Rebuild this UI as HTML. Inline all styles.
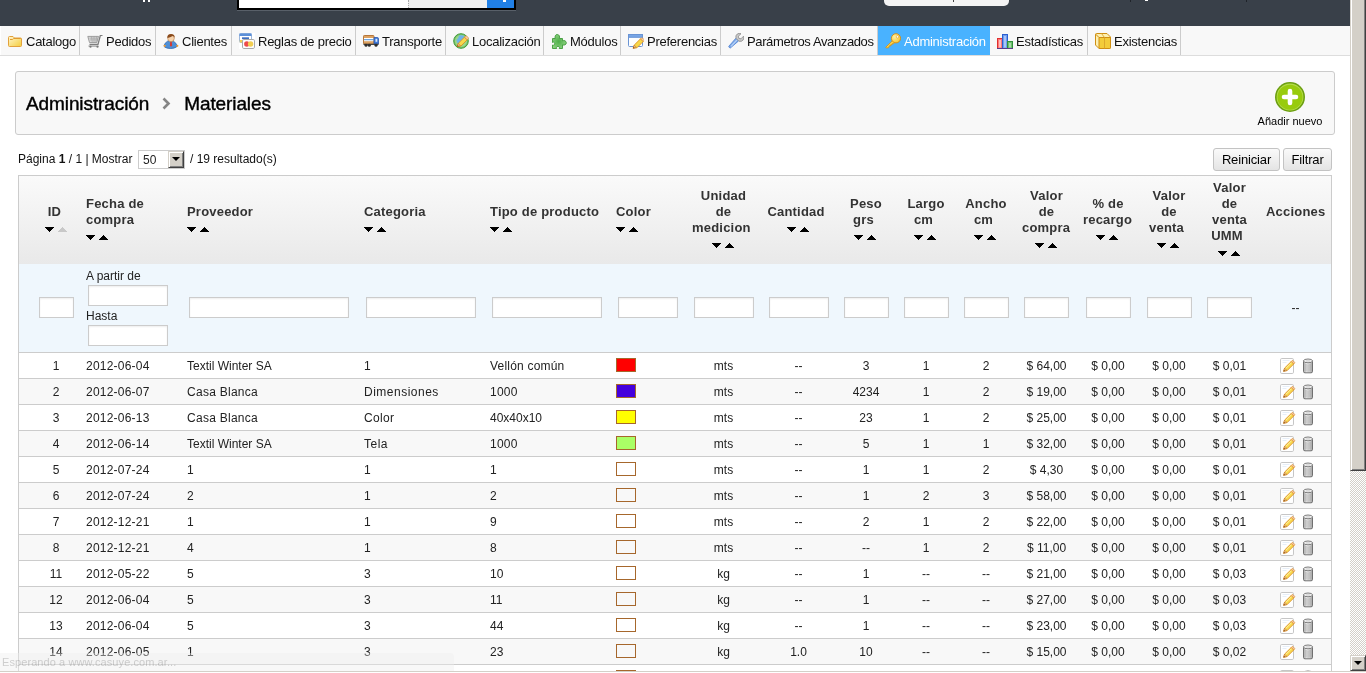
<!DOCTYPE html>
<html lang="es"><head><meta charset="utf-8"><title>Materiales</title>
<style>
*{box-sizing:border-box}
html,body{margin:0;padding:0}
body{width:1366px;height:673px;overflow:hidden;position:relative;background:#fff;font-family:"Liberation Sans",Arial,sans-serif;font-size:12px;color:#222}
#page{will-change:transform;position:absolute;left:0;top:0;width:1350px;height:671px;overflow:hidden;background:#fff}
#hdr{position:absolute;left:0;top:0;width:1350px;height:26px;background:#394049}
#hdr i{position:absolute;display:block}
#menu{position:absolute;left:0;top:26px;width:1350px;height:30px;background:#f8f8f8;box-shadow:inset 1px 0 0 #fff;border-bottom:1px solid #ddd;margin:0;padding:0;list-style:none}
#menu li{position:relative;float:left;height:29px;border-right:1px solid #ccc;padding:0 0 0 26px;font-size:13px;line-height:32px;white-space:nowrap;color:#111;letter-spacing:-.25px;overflow:hidden}
#menu li.act{background:#49b2ff;color:#fff;border-right-color:#49b2ff}
#menu li .ic{position:absolute;left:7px;top:7px}
#tb{position:absolute;left:15px;top:71px;width:1320px;height:64px;background:#f8f8f8;border:1px solid #ccc;border-radius:3px}
#tb h3{position:absolute;left:10px;top:20px;margin:0;font-weight:normal;-webkit-text-stroke:.4px #000;font-size:19px;line-height:24px;color:#000;white-space:nowrap;letter-spacing:-.1px}
#tb h3 .sep{display:inline-block;width:35px;text-align:center;color:#777;font-size:15px;vertical-align:0}
#add{position:absolute;left:1241px;top:9px;width:66px;text-align:center;font-size:11px;color:#000}
#pag{position:absolute;left:18px;top:151px;height:17px;line-height:17px;font-size:12px;white-space:nowrap;color:#111}
.sel{position:absolute;left:138px;top:150px;width:47px;height:19px;border:1px solid #ccc;background:#fff}
#pag2{position:absolute;left:190px;top:151px;height:17px;line-height:17px;font-size:12px;white-space:nowrap;color:#111}
.btn{position:absolute;top:148px;height:23px;border:1px solid #c3c3c3;border-radius:3px;background:linear-gradient(#fafafa,#e4e4e4);font-size:13px;line-height:21px;text-align:center;color:#000;letter-spacing:-.15px}
table{position:absolute;left:18px;top:175px;width:1314px;border-collapse:separate;border-spacing:0;border:1px solid #ccc;table-layout:fixed;font-size:12px}
th{font-size:13px;font-weight:bold;color:#333;text-align:left;padding:0 6px;vertical-align:middle;line-height:16px;letter-spacing:.2px}
th.c,td.c{text-align:center}
tr.h{height:88px;background:linear-gradient(#fafafa,#e9e9e9)}
tr.f{height:89px;background:#eff7fd}
tr.f td{border-bottom:1px solid #ccc;padding:0 6px 2px;vertical-align:middle}
tr.r td{height:26px;border-bottom:1px solid #ccc;padding:0 6px;white-space:nowrap;color:#222}
tr.alt{background:#f8f8f8}
.dn,.up{display:inline-block;width:9px;height:5px;vertical-align:0}
.dn{margin-right:4px}
th.c .up{margin-right:2px}
.ls{margin-right:5px}
.in{display:inline-block;height:21px;border:1px solid #ccc;background:#fff;box-shadow:inset 0 1px 2px #eee;margin:0 2px;vertical-align:middle}
.dt{position:relative;height:88px}.dt span{position:absolute;left:6px;line-height:16px;white-space:nowrap}.dt span.in{left:8px;width:80px;margin:0}
.sw{display:inline-block;width:20px;height:14px;border:1px solid #a6672c;vertical-align:middle;margin-top:-2px}
.pe{vertical-align:middle;margin-right:4px}.tr{vertical-align:middle}
td.ac{text-align:left;padding-left:20px!important}
#sb{position:absolute;left:1350px;top:0;width:16px;height:671px;background-color:#fff;background-image:conic-gradient(#d4d0c8 25%,#fff 0 50%,#d4d0c8 0 75%,#fff 0);background-size:2px 2px}
.w3d{position:absolute;left:0;width:16px;background:#d4d0c8;border:1px solid;border-color:#d4d0c8 #404040 #404040 #d4d0c8;box-shadow:inset 1px 1px 0 #fff,inset -1px -1px 0 #808080}
#status{position:absolute;left:0;top:653px;width:454px;height:18px;background:rgba(238,238,238,.4);border-top-right-radius:4px;color:rgba(110,110,110,.3);font-size:11px;line-height:18px;padding-left:2px;letter-spacing:.08px}
</style></head><body>
<svg width="0" height="0" style="position:absolute"><defs>
<linearGradient id="gF" x1="0" y1="0" x2="1" y2="1"><stop offset="0" stop-color="#fff7cf"/><stop offset="1" stop-color="#f4cd3c"/></linearGradient>
<radialGradient id="gP" cx=".45" cy=".5" r=".6"><stop offset="0" stop-color="#4fae4a"/><stop offset="1" stop-color="#8fd482"/></radialGradient>
<radialGradient id="gK" cx=".35" cy=".35" r=".8"><stop offset="0" stop-color="#fff0a0"/><stop offset="1" stop-color="#f6bf20"/></radialGradient>
<linearGradient id="gT" x1="0" x2="1" y1="0" y2="0"><stop offset="0" stop-color="#a2a2a2"/><stop offset=".35" stop-color="#efefef"/><stop offset=".7" stop-color="#d6d6d6"/><stop offset="1" stop-color="#9a9a9a"/></linearGradient>
</defs></svg>
<div id="page">
<div id="hdr">
 <i style="left:143px;top:0;width:2px;height:2px;background:#fff"></i><i style="left:148px;top:0;width:2px;height:2px;background:#fff"></i>
 <i style="left:237px;top:0;width:279px;height:10px;background:#000"></i>
 <i style="left:237px;top:10px;width:279px;height:1px;background:#596069"></i>
 <i style="left:239px;top:0;width:169px;height:8px;background:#fff"></i>
 <i style="left:408px;top:0;width:79px;height:8px;background:#efefef;border-left:1px dotted #aaa"></i>
 <i style="left:487px;top:0;width:27px;height:8px;background:#2180e6"></i>
 <i style="left:503px;top:0;width:3px;height:2px;background:#fff"></i>
 <i style="left:884px;top:0;width:125px;height:6px;background:#f4f4f4;border-radius:0 0 5px 5px"></i>
 <i style="left:953px;top:0;width:1px;height:2px;background:#444"></i>
 <i style="left:1130px;top:0;width:1px;height:2px;background:#1f2329"></i>
 <i style="left:1145px;top:0;width:3px;height:1px;background:#fff"></i>
 <i style="left:1246px;top:0;width:1px;height:2px;background:#1f2329"></i>
</div>
<ul id="menu">
<li style="width:80px"><svg class="ic" width="16" height="16" viewBox="0 0 16 16"><path d="M1.500 4.500q0-1 1-1h3.500l1.500 1.500h6q1 0 1 1v6.500q0 1-1 1h-11q-1 0-1-1z" fill="url(#gF)" stroke="#e2a13c"/><path d="M3 6.500h2.500l1.200-1h7" fill="none" stroke="#e09a30"/></svg>Catalogo</li>
<li style="width:76px"><svg class="ic" width="16" height="16" viewBox="0 0 16 16"><g transform="translate(0,1.200) scale(1,.880)"><path d="M.800 2.500h10.700l-1.700 7h-7.300z" fill="#d9d9d9" stroke="#8f8f8f" stroke-width=".9"/><path d="M2.500 4.500h8.200M3 6.500h7.300M4.500 2.500l.800 7M7 2.500v7M9.500 2.500l-.700 7" stroke="#9a9a9a" stroke-width=".6" fill="none"/><path d="M15.500 1.500h-2.200l-2.300 10h-8.500" fill="none" stroke="#7d7d7d" stroke-width="1.300"/><path d="M1.500 13.500h10" stroke="#a5a5a5" stroke-width="1.600"/><circle cx="3.500" cy="14.300" r="1.100" fill="#777"/><circle cx="10.500" cy="14.300" r="1.100" fill="#777"/></g></svg>Pedidos</li>
<li style="width:76px"><svg class="ic" width="16" height="16" viewBox="0 0 16 16"><path d="M1.500 14q-.800-1.500.500-3.500l2.500-2.300h6l2.500 2.300q1.300 2 .500 3.500-2.500 1.500-6 1.500t-6-1.500z" fill="#4e8fd6" stroke="#2c66b0" stroke-width=".8"/><circle cx="1.700" cy="12.800" r="1.100" fill="#f29a2e"/><circle cx="14.300" cy="12.800" r="1.100" fill="#f29a2e"/><path d="M7.300 8.500h1.400l.500 4-1.200 1.200-1.200-1.200z" fill="#d83a2e"/><ellipse cx="8" cy="5.300" rx="3.300" ry="3.400" fill="#f6d3ad" stroke="#b77a45" stroke-width=".6"/><path d="M4.300 5q-.300-4 3.700-4t3.700 4q-.700-1.800-2-2-2.500 1.500-5.400 2z" fill="#8a4b1c"/></svg>Clientes</li>
<li style="width:124px"><svg class="ic" width="16" height="16" viewBox="0 0 16 16"><rect width="16" height="16" fill="#fff"/><rect x=".500" y=".500" width="12" height="9" rx="1" fill="#fff" stroke="#9db7dc"/><rect x=".500" y=".500" width="12" height="2.500" fill="#5b8fd8"/><path d="M3 5.200h7" stroke="#3f6fc0" stroke-width="1.800"/><rect x=".800" y="7" width="3" height="2.500" fill="#f5cf4d"/><rect x="3.500" y="6.500" width="12" height="9" rx="1.300" fill="#fdfdfd" stroke="#a9a9a9"/><circle cx="7.800" cy="11" r="2.700" fill="#ee4a4a"/><circle cx="11.600" cy="11" r="2.700" fill="#f3cf52"/></svg>Reglas de precio</li>
<li style="width:90px"><svg class="ic" width="16" height="16" viewBox="0 0 16 16"><rect x=".500" y="2.500" width="10.500" height="8.500" rx=".800" fill="#dca262" stroke="#b5763a"/><rect x="1" y="5" width="9.500" height="3.200" fill="#fff"/><rect x="1" y="6.200" width="9.500" height="1" fill="#4d8fd8"/><path d="M11 4.500h3.200q1.300 0 1.300 1.300v5.200h-4.500z" fill="#3c78d8" stroke="#2a57ae" stroke-width=".8"/><rect x="12.500" y="5.800" width="1.800" height="3" fill="#dbe8fa"/><rect x=".500" y="10.800" width="15" height="1.200" fill="#444"/><circle cx="3" cy="12.300" r="1.500" fill="#2e2e2e"/><circle cx="6.300" cy="12.300" r="1.500" fill="#2e2e2e"/><circle cx="13" cy="12.300" r="1.500" fill="#2e2e2e"/></svg>Transporte</li>
<li style="width:98px"><svg class="ic" width="16" height="16" viewBox="0 0 16 16"><circle cx="8" cy="8" r="7.300" fill="#7cc36a" stroke="#3f9a3a" stroke-width="1"/><circle cx="8" cy="8" r="6" fill="#9ad88a"/><path d="M6 2.500q5-1.500 7 3l-6 6q-3.500-1-3.500-4.500 2-1 2.500-4.500z" fill="#6eb4e8"/><path d="M4.200 13.600l1-3.200 6.300-6.300 2.700 2.700-6.300 6.300z" fill="#f7d84a" stroke="#d98a1e" stroke-width=".8" stroke-linejoin="round"/><path d="M11.500 4.100l2.700 2.700 1-1q.500-.600 0-1.200l-1.500-1.500q-.600-.500-1.200 0z" fill="#f8c9a8" stroke="#d98a1e" stroke-width=".6"/><path d="M4.200 13.600l1-3.200 2.200 2.200z" fill="#f0c28a" stroke="#b86a1a" stroke-width=".5"/><path d="M4.200 13.600l.400-1.400 1 1z" fill="#6b3a10"/></svg>Localización</li>
<li style="width:77px"><svg class="ic" width="16" height="16" viewBox="0 0 16 16"><path d="M1.500 5.500h2.800q-.600-1.300 0-2.700t2-1.300 2 1.300 0 2.700h3.200v2.300q1.300-.600 2.500 0t1.300 2-1.300 2-2.500 0v3.700h-3.300q.600-1.300-.300-1.900t-1.900 0-.300 1.900h-4.200v-3.500q1.200.600 1.900-.300t0-2-1.900-.200z" fill="url(#gP)" stroke="#3f9a3a" stroke-width=".9" stroke-linejoin="round"/></svg>Módulos</li>
<li style="width:100px"><svg class="ic" width="16" height="16" viewBox="0 0 16 16"><rect x=".500" y="1.500" width="14" height="12" rx="1" fill="#fdfeff" stroke="#6a94d4"/><rect x=".500" y="1.500" width="14" height="2.800" fill="#78a6e6" stroke="#6a94d4"/><path d="M5.200 15.300l1-3.200 6.300-6.300 2.700 2.700-6.300 6.300z" fill="#f7d84a" stroke="#d98a1e" stroke-width=".8" stroke-linejoin="round"/><path d="M12.500 5.800l2.700 2.700 .800-.800q.500-.600 0-1.200l-1.500-1.500q-.600-.500-1.200 0z" fill="#f8c9a8" stroke="#d98a1e" stroke-width=".6"/><path d="M5.200 15.300l1-3.200 2.200 2.200z" fill="#f0c28a" stroke="#b86a1a" stroke-width=".5"/><path d="M5.200 15.300l.400-1.400 1 1z" fill="#6b3a10"/></svg>Preferencias</li>
<li style="width:157px;letter-spacing:-.38px"><svg class="ic" width="16" height="16" viewBox="0 0 16 16"><path d="M2.300 15q-1.300-.300-1.600-1.600l7.200-8.200 2.700 2.700z" fill="#7aa7e8" stroke="#4d7fd0" stroke-width=".8" stroke-linejoin="round"/><path d="M3 13.300l6-6.500" stroke="#b8d2f6" stroke-width="1.200"/><path d="M8 5.300q-.800-2.800 1.300-4.300 1.800-1.200 3.700-.300l-2.600 2.500.400 2.200 2.200.400 2.500-2.600q.900 1.900-.300 3.700-1.500 2.100-4.300 1.300z" fill="#c9c9c9" stroke="#8a8a8a" stroke-width=".8" stroke-linejoin="round"/></svg>Parámetros Avanzados</li>
<li class="act" style="width:112px"><svg class="ic" width="16" height="16" viewBox="0 0 16 16"><path d="M.800 14.200l7.700-7.500 2 2-2.200 2.200-1-.300-.300 1.300-1.200-.200-.200 1.300-1.300-.200-.700 1.900-2.300.300z" fill="#fbd648" stroke="#d48a12" stroke-width=".8" stroke-linejoin="round"/><circle cx="11" cy="5.300" r="4.600" fill="url(#gK)" stroke="#d48a12" stroke-width=".9"/><circle cx="12.500" cy="3.800" r="1.200" fill="#fff" stroke="#d48a12" stroke-width=".5"/></svg>Administración</li>
<li style="width:98px"><svg class="ic" width="16" height="16" viewBox="0 0 16 16"><rect x=".500" y="5.500" width="5" height="10" fill="#f77" stroke="#e03030"/><rect x="2" y="7" width="2" height="7.500" fill="#fbb"/><rect x="5.500" y="1.500" width="5" height="14" fill="#6f9df0" stroke="#2c5fd0"/><rect x="7" y="3" width="2" height="11.500" fill="#a9c4f7"/><rect x="10.500" y="8.500" width="5" height="7" fill="#6cbf6c" stroke="#2f8f3a"/><rect x="12" y="10" width="2" height="4.500" fill="#a8dba8"/><path d="M0 15.500h16" stroke="#5a3a8a" stroke-width="1"/></svg>Estadísticas</li>
<li style="width:93px"><svg class="ic" width="16" height="16" viewBox="0 0 16 16"><path d="M.500 1.500q0-1 1-1h10.500l3.500 3.500v10.500q0 1-1 1h-10.500l-3.500-3.500z" fill="#fdf0b0" stroke="#cf8f14" stroke-linejoin="round"/><path d="M4 4.500h11.500v10q0 1-1 1h-10.500z" fill="#f3cc3a" stroke="#cf8f14" stroke-linejoin="round"/><path d="M.500 1l3.500 3.500" stroke="#cf8f14"/><path d="M6.500 .500l3 4v11" fill="none" stroke="#d9a42a" stroke-width=".9"/></svg>Existencias</li>
</ul>
<div id="tb"><h3>Administración<span class="sep"><svg width="9" height="13" viewBox="0 0 9 13"><path d="M1.500 1.500l5 5-5 5" fill="none" stroke="#858585" stroke-width="2.600"/></svg></span>Materiales</h3>
<div id="add"><svg width="32" height="32" viewBox="0 0 32 32" style="display:block;margin:0 auto 2px"><circle cx="16" cy="16" r="15" fill="#6c9f10"/><circle cx="16" cy="16" r="13.400" fill="#b4db4a"/><circle cx="16" cy="16.200" r="12.500" fill="#98cb0d"/><path d="M10 16h12M16 10v12" stroke="#fff" stroke-width="4.600" stroke-linecap="round"/></svg>Añadir nuevo</div>
</div>
<div id="pag">Página <b>1</b> / 1 | Mostrar</div>
<div class="sel"><span style="position:absolute;left:4px;top:1px;line-height:17px;font-size:12px">50</span><span class="w3d" style="left:29px;top:0;width:16px;height:17px"><i style="position:absolute;left:3px;top:5px;border-left:4px solid transparent;border-right:4px solid transparent;border-top:4px solid #000"></i></span></div>
<div id="pag2">/ 19 resultado(s)</div>
<div class="btn" style="left:1213px;width:67px">Reiniciar</div>
<div class="btn" style="left:1283px;width:49px">Filtrar</div>
<table>
<colgroup><col style="width:13px"><col style="width:48px"><col style="width:101px"><col style="width:177px"><col style="width:126px"><col style="width:126px"><col style="width:76px"><col style="width:75px"><col style="width:75px"><col style="width:60px"><col style="width:60px"><col style="width:60px"><col style="width:61px"><col style="width:62px"><col style="width:60px"><col style="width:61px"><col style="width:71px"></colgroup>
<tr class="h"><th></th>
<th class="c" style="padding-left:8px"><span class="tl"><span class="ls">ID</span></span><br><svg class="dn" viewBox="0 0 9 5" shape-rendering="crispEdges"><path d="M0 0h9v1h-1v1h-1v1h-1v1h-1v1h-1v-1h-1v-1h-1v-1h-1v-1h-1z" fill="#000"/></svg><svg class="up" viewBox="0 0 9 5" shape-rendering="crispEdges"><path d="M0 5h9v-1h-1v-1h-1v-1h-1v-1h-1v-1h-1v1h-1v1h-1v1h-1v1h-1z" fill="#c8c8c8"/></svg></th>
<th class=""><span class="tl">Fecha de<br>compra</span><br><svg class="dn" viewBox="0 0 9 5" shape-rendering="crispEdges"><path d="M0 0h9v1h-1v1h-1v1h-1v1h-1v1h-1v-1h-1v-1h-1v-1h-1v-1h-1z" fill="#000"/></svg><svg class="up" viewBox="0 0 9 5" shape-rendering="crispEdges"><path d="M0 5h9v-1h-1v-1h-1v-1h-1v-1h-1v-1h-1v1h-1v1h-1v1h-1v1h-1z" fill="#000"/></svg></th>
<th class=""><span class="tl">Proveedor</span><br><svg class="dn" viewBox="0 0 9 5" shape-rendering="crispEdges"><path d="M0 0h9v1h-1v1h-1v1h-1v1h-1v1h-1v-1h-1v-1h-1v-1h-1v-1h-1z" fill="#000"/></svg><svg class="up" viewBox="0 0 9 5" shape-rendering="crispEdges"><path d="M0 5h9v-1h-1v-1h-1v-1h-1v-1h-1v-1h-1v1h-1v1h-1v1h-1v1h-1z" fill="#000"/></svg></th>
<th class=""><span class="tl">Categoria</span><br><svg class="dn" viewBox="0 0 9 5" shape-rendering="crispEdges"><path d="M0 0h9v1h-1v1h-1v1h-1v1h-1v1h-1v-1h-1v-1h-1v-1h-1v-1h-1z" fill="#000"/></svg><svg class="up" viewBox="0 0 9 5" shape-rendering="crispEdges"><path d="M0 5h9v-1h-1v-1h-1v-1h-1v-1h-1v-1h-1v1h-1v1h-1v1h-1v1h-1z" fill="#000"/></svg></th>
<th class=""><span class="tl">Tipo de producto</span><br><svg class="dn" viewBox="0 0 9 5" shape-rendering="crispEdges"><path d="M0 0h9v1h-1v1h-1v1h-1v1h-1v1h-1v-1h-1v-1h-1v-1h-1v-1h-1z" fill="#000"/></svg><svg class="up" viewBox="0 0 9 5" shape-rendering="crispEdges"><path d="M0 5h9v-1h-1v-1h-1v-1h-1v-1h-1v-1h-1v1h-1v1h-1v1h-1v1h-1z" fill="#000"/></svg></th>
<th class=""><span class="tl">Color</span><br><svg class="dn" viewBox="0 0 9 5" shape-rendering="crispEdges"><path d="M0 0h9v1h-1v1h-1v1h-1v1h-1v1h-1v-1h-1v-1h-1v-1h-1v-1h-1z" fill="#000"/></svg><svg class="up" viewBox="0 0 9 5" shape-rendering="crispEdges"><path d="M0 5h9v-1h-1v-1h-1v-1h-1v-1h-1v-1h-1v1h-1v1h-1v1h-1v1h-1z" fill="#000"/></svg></th>
<th class="c"><span class="tl">Unidad<br>de<br><span class="ls">medicion</span></span><br><svg class="dn" viewBox="0 0 9 5" shape-rendering="crispEdges"><path d="M0 0h9v1h-1v1h-1v1h-1v1h-1v1h-1v-1h-1v-1h-1v-1h-1v-1h-1z" fill="#000"/></svg><svg class="up" viewBox="0 0 9 5" shape-rendering="crispEdges"><path d="M0 5h9v-1h-1v-1h-1v-1h-1v-1h-1v-1h-1v1h-1v1h-1v1h-1v1h-1z" fill="#000"/></svg></th>
<th class="c"><span class="tl"><span class="ls">Cantidad</span></span><br><svg class="dn" viewBox="0 0 9 5" shape-rendering="crispEdges"><path d="M0 0h9v1h-1v1h-1v1h-1v1h-1v1h-1v-1h-1v-1h-1v-1h-1v-1h-1z" fill="#000"/></svg><svg class="up" viewBox="0 0 9 5" shape-rendering="crispEdges"><path d="M0 5h9v-1h-1v-1h-1v-1h-1v-1h-1v-1h-1v1h-1v1h-1v1h-1v1h-1z" fill="#000"/></svg></th>
<th class="c"><span class="tl">Peso<br><span class="ls">grs</span></span><br><svg class="dn" viewBox="0 0 9 5" shape-rendering="crispEdges"><path d="M0 0h9v1h-1v1h-1v1h-1v1h-1v1h-1v-1h-1v-1h-1v-1h-1v-1h-1z" fill="#000"/></svg><svg class="up" viewBox="0 0 9 5" shape-rendering="crispEdges"><path d="M0 5h9v-1h-1v-1h-1v-1h-1v-1h-1v-1h-1v1h-1v1h-1v1h-1v1h-1z" fill="#000"/></svg></th>
<th class="c"><span class="tl">Largo<br><span class="ls">cm</span></span><br><svg class="dn" viewBox="0 0 9 5" shape-rendering="crispEdges"><path d="M0 0h9v1h-1v1h-1v1h-1v1h-1v1h-1v-1h-1v-1h-1v-1h-1v-1h-1z" fill="#000"/></svg><svg class="up" viewBox="0 0 9 5" shape-rendering="crispEdges"><path d="M0 5h9v-1h-1v-1h-1v-1h-1v-1h-1v-1h-1v1h-1v1h-1v1h-1v1h-1z" fill="#000"/></svg></th>
<th class="c"><span class="tl">Ancho<br><span class="ls">cm</span></span><br><svg class="dn" viewBox="0 0 9 5" shape-rendering="crispEdges"><path d="M0 0h9v1h-1v1h-1v1h-1v1h-1v1h-1v-1h-1v-1h-1v-1h-1v-1h-1z" fill="#000"/></svg><svg class="up" viewBox="0 0 9 5" shape-rendering="crispEdges"><path d="M0 5h9v-1h-1v-1h-1v-1h-1v-1h-1v-1h-1v1h-1v1h-1v1h-1v1h-1z" fill="#000"/></svg></th>
<th class="c"><span class="tl">Valor<br>de<br><span class="ls">compra</span></span><br><svg class="dn" viewBox="0 0 9 5" shape-rendering="crispEdges"><path d="M0 0h9v1h-1v1h-1v1h-1v1h-1v1h-1v-1h-1v-1h-1v-1h-1v-1h-1z" fill="#000"/></svg><svg class="up" viewBox="0 0 9 5" shape-rendering="crispEdges"><path d="M0 5h9v-1h-1v-1h-1v-1h-1v-1h-1v-1h-1v1h-1v1h-1v1h-1v1h-1z" fill="#000"/></svg></th>
<th class="c"><span class="tl">% de<br><span class="ls">recargo</span></span><br><svg class="dn" viewBox="0 0 9 5" shape-rendering="crispEdges"><path d="M0 0h9v1h-1v1h-1v1h-1v1h-1v1h-1v-1h-1v-1h-1v-1h-1v-1h-1z" fill="#000"/></svg><svg class="up" viewBox="0 0 9 5" shape-rendering="crispEdges"><path d="M0 5h9v-1h-1v-1h-1v-1h-1v-1h-1v-1h-1v1h-1v1h-1v1h-1v1h-1z" fill="#000"/></svg></th>
<th class="c"><span class="tl">Valor<br>de<br><span class="ls">venta</span></span><br><svg class="dn" viewBox="0 0 9 5" shape-rendering="crispEdges"><path d="M0 0h9v1h-1v1h-1v1h-1v1h-1v1h-1v-1h-1v-1h-1v-1h-1v-1h-1z" fill="#000"/></svg><svg class="up" viewBox="0 0 9 5" shape-rendering="crispEdges"><path d="M0 5h9v-1h-1v-1h-1v-1h-1v-1h-1v-1h-1v1h-1v1h-1v1h-1v1h-1z" fill="#000"/></svg></th>
<th class="c"><span class="tl">Valor<br>de<br>venta<br><span class="ls">UMM</span></span><br><svg class="dn" viewBox="0 0 9 5" shape-rendering="crispEdges"><path d="M0 0h9v1h-1v1h-1v1h-1v1h-1v1h-1v-1h-1v-1h-1v-1h-1v-1h-1z" fill="#000"/></svg><svg class="up" viewBox="0 0 9 5" shape-rendering="crispEdges"><path d="M0 5h9v-1h-1v-1h-1v-1h-1v-1h-1v-1h-1v1h-1v1h-1v1h-1v1h-1z" fill="#000"/></svg></th>
<th class="c">Acciones<br>&nbsp;</th></tr>
<tr class="f"><td></td>
<td style="padding-left:5px"><span class="in" style="width:35px"></span></td>
<td style="padding:0;vertical-align:top"><div class="dt"><span style="top:4px">A partir de</span><span class="in" style="top:21px"></span><span style="top:44px">Hasta</span><span class="in" style="top:61px"></span></div></td>
<td><span class="in" style="width:160px"></span></td>
<td><span class="in" style="width:110px"></span></td>
<td><span class="in" style="width:110px"></span></td>
<td><span class="in" style="width:60px"></span></td>
<td class="c"><span class="in" style="width:60px"></span></td>
<td class="c"><span class="in" style="width:60px"></span></td>
<td class="c"><span class="in" style="width:45px"></span></td>
<td class="c"><span class="in" style="width:45px"></span></td>
<td class="c"><span class="in" style="width:45px"></span></td>
<td class="c"><span class="in" style="width:45px"></span></td>
<td class="c"><span class="in" style="width:45px"></span></td>
<td class="c"><span class="in" style="width:45px"></span></td>
<td class="c"><span class="in" style="width:45px"></span></td>
<td class="c" style="padding-bottom:0">--</td></tr>
<tr class="r"><td></td>
<td class="c">1</td><td style="letter-spacing:0.22px">2012-06-04</td><td>Textil Winter SA</td><td>1</td><td style="letter-spacing:0.20px">Vellón común</td>
<td><span class="sw" style="background:#ff0000"></span></td>
<td class="c">mts</td>
<td class="c">--</td>
<td class="c">3</td>
<td class="c">1</td>
<td class="c">2</td>
<td class="c">$ 64,00</td>
<td class="c">$ 0,00</td>
<td class="c">$ 0,00</td>
<td class="c">$ 0,01</td>
<td class="ac"><svg class="pe" width="16" height="16" viewBox="0 0 16 16"><rect x=".500" y=".500" width="13" height="15" rx="1.300" fill="#fff" stroke="#c6c6c6"/><path d="M2.500 2.500h7M2.500 4.500h4" stroke="#e6eef8"/><g transform="translate(.9,1.100) scale(.9)"><path d="M3 13.600l1.100-3.600 7.400-7.400 2.800 2.800-7.400 7.400z" fill="#f8d94e" stroke="#d98a1e" stroke-width=".9" stroke-linejoin="round"/><path d="M5.200 10.600l6.800-6.800" stroke="#fff4b0" stroke-width="1"/><path d="M11.500 2.600l2.800 2.800 .800-.800q.600-.600 0-1.200l-1.600-1.600q-.600-.600-1.200 0z" fill="#f7c4a0" stroke="#d98a1e" stroke-width=".7"/><path d="M3 13.600l1.100-3.600 2.500 2.500z" fill="#efc08a" stroke="#b86a1a" stroke-width=".5"/><path d="M3 13.600l.500-1.600 1.100 1.100z" fill="#6b3a10"/></g></svg><svg class="tr" width="16" height="16" viewBox="0 0 16 16"><path d="M3.500 2.800v10.700q0 1.300 1.500 1.300h6q1.500 0 1.500-1.300v-10.700z" fill="url(#gT)" stroke="#707070"/><ellipse cx="8" cy="2.900" rx="4.500" ry="1.900" fill="#f1f1f1" stroke="#7c7c7c"/><ellipse cx="8" cy="2.900" rx="2.500" ry=".900" fill="#d8d8d8"/><path d="M6 6v7.500M8 6.300v7.500M10 6v7.500" stroke="#9e9e9e" stroke-width=".8"/></svg></td></tr>
<tr class="r alt"><td></td>
<td class="c">2</td><td style="letter-spacing:0.22px">2012-06-07</td><td style="letter-spacing:0.27px">Casa Blanca</td><td style="letter-spacing:0.50px">Dimensiones</td><td style="letter-spacing:0.25px">1000</td>
<td><span class="sw" style="background:#4400dd"></span></td>
<td class="c">mts</td>
<td class="c">--</td>
<td class="c">4234</td>
<td class="c">1</td>
<td class="c">2</td>
<td class="c">$ 19,00</td>
<td class="c">$ 0,00</td>
<td class="c">$ 0,00</td>
<td class="c">$ 0,01</td>
<td class="ac"><svg class="pe" width="16" height="16" viewBox="0 0 16 16"><rect x=".500" y=".500" width="13" height="15" rx="1.300" fill="#fff" stroke="#c6c6c6"/><path d="M2.500 2.500h7M2.500 4.500h4" stroke="#e6eef8"/><g transform="translate(.9,1.100) scale(.9)"><path d="M3 13.600l1.100-3.600 7.400-7.400 2.800 2.800-7.400 7.400z" fill="#f8d94e" stroke="#d98a1e" stroke-width=".9" stroke-linejoin="round"/><path d="M5.200 10.600l6.800-6.800" stroke="#fff4b0" stroke-width="1"/><path d="M11.500 2.600l2.800 2.800 .800-.800q.600-.600 0-1.200l-1.600-1.600q-.600-.600-1.200 0z" fill="#f7c4a0" stroke="#d98a1e" stroke-width=".7"/><path d="M3 13.600l1.100-3.600 2.500 2.500z" fill="#efc08a" stroke="#b86a1a" stroke-width=".5"/><path d="M3 13.600l.500-1.600 1.100 1.100z" fill="#6b3a10"/></g></svg><svg class="tr" width="16" height="16" viewBox="0 0 16 16"><path d="M3.500 2.800v10.700q0 1.300 1.500 1.300h6q1.500 0 1.500-1.300v-10.700z" fill="url(#gT)" stroke="#707070"/><ellipse cx="8" cy="2.900" rx="4.500" ry="1.900" fill="#f1f1f1" stroke="#7c7c7c"/><ellipse cx="8" cy="2.900" rx="2.500" ry=".900" fill="#d8d8d8"/><path d="M6 6v7.500M8 6.300v7.500M10 6v7.500" stroke="#9e9e9e" stroke-width=".8"/></svg></td></tr>
<tr class="r"><td></td>
<td class="c">3</td><td style="letter-spacing:0.22px">2012-06-13</td><td style="letter-spacing:0.27px">Casa Blanca</td><td style="letter-spacing:0.30px">Color</td><td>40x40x10</td>
<td><span class="sw" style="background:#ffff00"></span></td>
<td class="c">mts</td>
<td class="c">--</td>
<td class="c">23</td>
<td class="c">1</td>
<td class="c">2</td>
<td class="c">$ 25,00</td>
<td class="c">$ 0,00</td>
<td class="c">$ 0,00</td>
<td class="c">$ 0,01</td>
<td class="ac"><svg class="pe" width="16" height="16" viewBox="0 0 16 16"><rect x=".500" y=".500" width="13" height="15" rx="1.300" fill="#fff" stroke="#c6c6c6"/><path d="M2.500 2.500h7M2.500 4.500h4" stroke="#e6eef8"/><g transform="translate(.9,1.100) scale(.9)"><path d="M3 13.600l1.100-3.600 7.400-7.400 2.800 2.800-7.400 7.400z" fill="#f8d94e" stroke="#d98a1e" stroke-width=".9" stroke-linejoin="round"/><path d="M5.200 10.600l6.800-6.800" stroke="#fff4b0" stroke-width="1"/><path d="M11.500 2.600l2.800 2.800 .800-.800q.600-.600 0-1.200l-1.600-1.600q-.600-.600-1.200 0z" fill="#f7c4a0" stroke="#d98a1e" stroke-width=".7"/><path d="M3 13.600l1.100-3.600 2.500 2.500z" fill="#efc08a" stroke="#b86a1a" stroke-width=".5"/><path d="M3 13.600l.500-1.600 1.100 1.100z" fill="#6b3a10"/></g></svg><svg class="tr" width="16" height="16" viewBox="0 0 16 16"><path d="M3.500 2.800v10.700q0 1.300 1.500 1.300h6q1.500 0 1.500-1.300v-10.700z" fill="url(#gT)" stroke="#707070"/><ellipse cx="8" cy="2.900" rx="4.500" ry="1.900" fill="#f1f1f1" stroke="#7c7c7c"/><ellipse cx="8" cy="2.900" rx="2.500" ry=".900" fill="#d8d8d8"/><path d="M6 6v7.500M8 6.300v7.500M10 6v7.500" stroke="#9e9e9e" stroke-width=".8"/></svg></td></tr>
<tr class="r alt"><td></td>
<td class="c">4</td><td style="letter-spacing:0.22px">2012-06-14</td><td>Textil Winter SA</td><td style="letter-spacing:0.50px">Tela</td><td style="letter-spacing:0.25px">1000</td>
<td><span class="sw" style="background:#aaff66"></span></td>
<td class="c">mts</td>
<td class="c">--</td>
<td class="c">5</td>
<td class="c">1</td>
<td class="c">1</td>
<td class="c">$ 32,00</td>
<td class="c">$ 0,00</td>
<td class="c">$ 0,00</td>
<td class="c">$ 0,01</td>
<td class="ac"><svg class="pe" width="16" height="16" viewBox="0 0 16 16"><rect x=".500" y=".500" width="13" height="15" rx="1.300" fill="#fff" stroke="#c6c6c6"/><path d="M2.500 2.500h7M2.500 4.500h4" stroke="#e6eef8"/><g transform="translate(.9,1.100) scale(.9)"><path d="M3 13.600l1.100-3.600 7.400-7.400 2.800 2.800-7.400 7.400z" fill="#f8d94e" stroke="#d98a1e" stroke-width=".9" stroke-linejoin="round"/><path d="M5.200 10.600l6.800-6.800" stroke="#fff4b0" stroke-width="1"/><path d="M11.500 2.600l2.800 2.800 .800-.800q.600-.600 0-1.200l-1.600-1.600q-.600-.600-1.200 0z" fill="#f7c4a0" stroke="#d98a1e" stroke-width=".7"/><path d="M3 13.600l1.100-3.600 2.500 2.500z" fill="#efc08a" stroke="#b86a1a" stroke-width=".5"/><path d="M3 13.600l.500-1.600 1.100 1.100z" fill="#6b3a10"/></g></svg><svg class="tr" width="16" height="16" viewBox="0 0 16 16"><path d="M3.500 2.800v10.700q0 1.300 1.500 1.300h6q1.500 0 1.500-1.300v-10.700z" fill="url(#gT)" stroke="#707070"/><ellipse cx="8" cy="2.900" rx="4.500" ry="1.900" fill="#f1f1f1" stroke="#7c7c7c"/><ellipse cx="8" cy="2.900" rx="2.500" ry=".900" fill="#d8d8d8"/><path d="M6 6v7.500M8 6.300v7.500M10 6v7.500" stroke="#9e9e9e" stroke-width=".8"/></svg></td></tr>
<tr class="r"><td></td>
<td class="c">5</td><td style="letter-spacing:0.22px">2012-07-24</td><td>1</td><td>1</td><td>1</td>
<td><span class="sw" style="background:transparent"></span></td>
<td class="c">mts</td>
<td class="c">--</td>
<td class="c">1</td>
<td class="c">1</td>
<td class="c">2</td>
<td class="c">$ 4,30</td>
<td class="c">$ 0,00</td>
<td class="c">$ 0,00</td>
<td class="c">$ 0,01</td>
<td class="ac"><svg class="pe" width="16" height="16" viewBox="0 0 16 16"><rect x=".500" y=".500" width="13" height="15" rx="1.300" fill="#fff" stroke="#c6c6c6"/><path d="M2.500 2.500h7M2.500 4.500h4" stroke="#e6eef8"/><g transform="translate(.9,1.100) scale(.9)"><path d="M3 13.600l1.100-3.600 7.400-7.400 2.800 2.800-7.400 7.400z" fill="#f8d94e" stroke="#d98a1e" stroke-width=".9" stroke-linejoin="round"/><path d="M5.200 10.600l6.800-6.800" stroke="#fff4b0" stroke-width="1"/><path d="M11.500 2.600l2.800 2.800 .800-.800q.600-.600 0-1.200l-1.600-1.600q-.600-.600-1.200 0z" fill="#f7c4a0" stroke="#d98a1e" stroke-width=".7"/><path d="M3 13.600l1.100-3.600 2.500 2.500z" fill="#efc08a" stroke="#b86a1a" stroke-width=".5"/><path d="M3 13.600l.500-1.600 1.100 1.100z" fill="#6b3a10"/></g></svg><svg class="tr" width="16" height="16" viewBox="0 0 16 16"><path d="M3.500 2.800v10.700q0 1.300 1.500 1.300h6q1.500 0 1.500-1.300v-10.700z" fill="url(#gT)" stroke="#707070"/><ellipse cx="8" cy="2.900" rx="4.500" ry="1.900" fill="#f1f1f1" stroke="#7c7c7c"/><ellipse cx="8" cy="2.900" rx="2.500" ry=".900" fill="#d8d8d8"/><path d="M6 6v7.500M8 6.300v7.500M10 6v7.500" stroke="#9e9e9e" stroke-width=".8"/></svg></td></tr>
<tr class="r alt"><td></td>
<td class="c">6</td><td style="letter-spacing:0.22px">2012-07-24</td><td>2</td><td>1</td><td>2</td>
<td><span class="sw" style="background:transparent"></span></td>
<td class="c">mts</td>
<td class="c">--</td>
<td class="c">1</td>
<td class="c">2</td>
<td class="c">3</td>
<td class="c">$ 58,00</td>
<td class="c">$ 0,00</td>
<td class="c">$ 0,00</td>
<td class="c">$ 0,01</td>
<td class="ac"><svg class="pe" width="16" height="16" viewBox="0 0 16 16"><rect x=".500" y=".500" width="13" height="15" rx="1.300" fill="#fff" stroke="#c6c6c6"/><path d="M2.500 2.500h7M2.500 4.500h4" stroke="#e6eef8"/><g transform="translate(.9,1.100) scale(.9)"><path d="M3 13.600l1.100-3.600 7.400-7.400 2.800 2.800-7.400 7.400z" fill="#f8d94e" stroke="#d98a1e" stroke-width=".9" stroke-linejoin="round"/><path d="M5.200 10.600l6.800-6.800" stroke="#fff4b0" stroke-width="1"/><path d="M11.500 2.600l2.800 2.800 .800-.800q.600-.600 0-1.200l-1.600-1.600q-.600-.600-1.200 0z" fill="#f7c4a0" stroke="#d98a1e" stroke-width=".7"/><path d="M3 13.600l1.100-3.600 2.500 2.500z" fill="#efc08a" stroke="#b86a1a" stroke-width=".5"/><path d="M3 13.600l.500-1.600 1.100 1.100z" fill="#6b3a10"/></g></svg><svg class="tr" width="16" height="16" viewBox="0 0 16 16"><path d="M3.500 2.800v10.700q0 1.300 1.500 1.300h6q1.500 0 1.500-1.300v-10.700z" fill="url(#gT)" stroke="#707070"/><ellipse cx="8" cy="2.900" rx="4.500" ry="1.900" fill="#f1f1f1" stroke="#7c7c7c"/><ellipse cx="8" cy="2.900" rx="2.500" ry=".900" fill="#d8d8d8"/><path d="M6 6v7.500M8 6.300v7.500M10 6v7.500" stroke="#9e9e9e" stroke-width=".8"/></svg></td></tr>
<tr class="r"><td></td>
<td class="c">7</td><td style="letter-spacing:0.22px">2012-12-21</td><td>1</td><td>1</td><td>9</td>
<td><span class="sw" style="background:transparent"></span></td>
<td class="c">mts</td>
<td class="c">--</td>
<td class="c">2</td>
<td class="c">1</td>
<td class="c">2</td>
<td class="c">$ 22,00</td>
<td class="c">$ 0,00</td>
<td class="c">$ 0,00</td>
<td class="c">$ 0,01</td>
<td class="ac"><svg class="pe" width="16" height="16" viewBox="0 0 16 16"><rect x=".500" y=".500" width="13" height="15" rx="1.300" fill="#fff" stroke="#c6c6c6"/><path d="M2.500 2.500h7M2.500 4.500h4" stroke="#e6eef8"/><g transform="translate(.9,1.100) scale(.9)"><path d="M3 13.600l1.100-3.600 7.400-7.400 2.800 2.800-7.400 7.400z" fill="#f8d94e" stroke="#d98a1e" stroke-width=".9" stroke-linejoin="round"/><path d="M5.200 10.600l6.800-6.800" stroke="#fff4b0" stroke-width="1"/><path d="M11.500 2.600l2.800 2.800 .800-.800q.600-.600 0-1.200l-1.600-1.600q-.600-.600-1.200 0z" fill="#f7c4a0" stroke="#d98a1e" stroke-width=".7"/><path d="M3 13.600l1.100-3.600 2.500 2.500z" fill="#efc08a" stroke="#b86a1a" stroke-width=".5"/><path d="M3 13.600l.500-1.600 1.100 1.100z" fill="#6b3a10"/></g></svg><svg class="tr" width="16" height="16" viewBox="0 0 16 16"><path d="M3.500 2.800v10.700q0 1.300 1.500 1.300h6q1.500 0 1.500-1.300v-10.700z" fill="url(#gT)" stroke="#707070"/><ellipse cx="8" cy="2.900" rx="4.500" ry="1.900" fill="#f1f1f1" stroke="#7c7c7c"/><ellipse cx="8" cy="2.900" rx="2.500" ry=".900" fill="#d8d8d8"/><path d="M6 6v7.500M8 6.300v7.500M10 6v7.500" stroke="#9e9e9e" stroke-width=".8"/></svg></td></tr>
<tr class="r alt"><td></td>
<td class="c">8</td><td style="letter-spacing:0.22px">2012-12-21</td><td>4</td><td>1</td><td>8</td>
<td><span class="sw" style="background:transparent"></span></td>
<td class="c">mts</td>
<td class="c">--</td>
<td class="c">--</td>
<td class="c">1</td>
<td class="c">2</td>
<td class="c">$ 11,00</td>
<td class="c">$ 0,00</td>
<td class="c">$ 0,00</td>
<td class="c">$ 0,01</td>
<td class="ac"><svg class="pe" width="16" height="16" viewBox="0 0 16 16"><rect x=".500" y=".500" width="13" height="15" rx="1.300" fill="#fff" stroke="#c6c6c6"/><path d="M2.500 2.500h7M2.500 4.500h4" stroke="#e6eef8"/><g transform="translate(.9,1.100) scale(.9)"><path d="M3 13.600l1.100-3.600 7.400-7.400 2.800 2.800-7.400 7.400z" fill="#f8d94e" stroke="#d98a1e" stroke-width=".9" stroke-linejoin="round"/><path d="M5.200 10.600l6.800-6.800" stroke="#fff4b0" stroke-width="1"/><path d="M11.500 2.600l2.800 2.800 .800-.800q.600-.600 0-1.200l-1.600-1.600q-.600-.600-1.200 0z" fill="#f7c4a0" stroke="#d98a1e" stroke-width=".7"/><path d="M3 13.600l1.100-3.600 2.500 2.500z" fill="#efc08a" stroke="#b86a1a" stroke-width=".5"/><path d="M3 13.600l.500-1.600 1.100 1.100z" fill="#6b3a10"/></g></svg><svg class="tr" width="16" height="16" viewBox="0 0 16 16"><path d="M3.500 2.800v10.700q0 1.300 1.500 1.300h6q1.500 0 1.500-1.300v-10.700z" fill="url(#gT)" stroke="#707070"/><ellipse cx="8" cy="2.900" rx="4.500" ry="1.900" fill="#f1f1f1" stroke="#7c7c7c"/><ellipse cx="8" cy="2.900" rx="2.500" ry=".900" fill="#d8d8d8"/><path d="M6 6v7.500M8 6.300v7.500M10 6v7.500" stroke="#9e9e9e" stroke-width=".8"/></svg></td></tr>
<tr class="r"><td></td>
<td class="c">11</td><td style="letter-spacing:0.22px">2012-05-22</td><td>5</td><td>3</td><td>10</td>
<td><span class="sw" style="background:transparent"></span></td>
<td class="c">kg</td>
<td class="c">--</td>
<td class="c">1</td>
<td class="c">--</td>
<td class="c">--</td>
<td class="c">$ 21,00</td>
<td class="c">$ 0,00</td>
<td class="c">$ 0,00</td>
<td class="c">$ 0,03</td>
<td class="ac"><svg class="pe" width="16" height="16" viewBox="0 0 16 16"><rect x=".500" y=".500" width="13" height="15" rx="1.300" fill="#fff" stroke="#c6c6c6"/><path d="M2.500 2.500h7M2.500 4.500h4" stroke="#e6eef8"/><g transform="translate(.9,1.100) scale(.9)"><path d="M3 13.600l1.100-3.600 7.400-7.400 2.800 2.800-7.400 7.400z" fill="#f8d94e" stroke="#d98a1e" stroke-width=".9" stroke-linejoin="round"/><path d="M5.200 10.600l6.800-6.800" stroke="#fff4b0" stroke-width="1"/><path d="M11.500 2.600l2.800 2.800 .800-.800q.600-.600 0-1.200l-1.600-1.600q-.600-.600-1.200 0z" fill="#f7c4a0" stroke="#d98a1e" stroke-width=".7"/><path d="M3 13.600l1.100-3.600 2.500 2.500z" fill="#efc08a" stroke="#b86a1a" stroke-width=".5"/><path d="M3 13.600l.500-1.600 1.100 1.100z" fill="#6b3a10"/></g></svg><svg class="tr" width="16" height="16" viewBox="0 0 16 16"><path d="M3.500 2.800v10.700q0 1.300 1.500 1.300h6q1.500 0 1.500-1.300v-10.700z" fill="url(#gT)" stroke="#707070"/><ellipse cx="8" cy="2.900" rx="4.500" ry="1.900" fill="#f1f1f1" stroke="#7c7c7c"/><ellipse cx="8" cy="2.900" rx="2.500" ry=".900" fill="#d8d8d8"/><path d="M6 6v7.500M8 6.300v7.500M10 6v7.500" stroke="#9e9e9e" stroke-width=".8"/></svg></td></tr>
<tr class="r alt"><td></td>
<td class="c">12</td><td style="letter-spacing:0.22px">2012-06-04</td><td>5</td><td>3</td><td>11</td>
<td><span class="sw" style="background:transparent"></span></td>
<td class="c">kg</td>
<td class="c">--</td>
<td class="c">1</td>
<td class="c">--</td>
<td class="c">--</td>
<td class="c">$ 27,00</td>
<td class="c">$ 0,00</td>
<td class="c">$ 0,00</td>
<td class="c">$ 0,03</td>
<td class="ac"><svg class="pe" width="16" height="16" viewBox="0 0 16 16"><rect x=".500" y=".500" width="13" height="15" rx="1.300" fill="#fff" stroke="#c6c6c6"/><path d="M2.500 2.500h7M2.500 4.500h4" stroke="#e6eef8"/><g transform="translate(.9,1.100) scale(.9)"><path d="M3 13.600l1.100-3.600 7.400-7.400 2.800 2.800-7.400 7.400z" fill="#f8d94e" stroke="#d98a1e" stroke-width=".9" stroke-linejoin="round"/><path d="M5.200 10.600l6.800-6.800" stroke="#fff4b0" stroke-width="1"/><path d="M11.500 2.600l2.800 2.800 .800-.800q.600-.600 0-1.200l-1.600-1.600q-.600-.600-1.200 0z" fill="#f7c4a0" stroke="#d98a1e" stroke-width=".7"/><path d="M3 13.600l1.100-3.600 2.500 2.500z" fill="#efc08a" stroke="#b86a1a" stroke-width=".5"/><path d="M3 13.600l.500-1.600 1.100 1.100z" fill="#6b3a10"/></g></svg><svg class="tr" width="16" height="16" viewBox="0 0 16 16"><path d="M3.500 2.800v10.700q0 1.300 1.500 1.300h6q1.500 0 1.500-1.300v-10.700z" fill="url(#gT)" stroke="#707070"/><ellipse cx="8" cy="2.900" rx="4.500" ry="1.900" fill="#f1f1f1" stroke="#7c7c7c"/><ellipse cx="8" cy="2.900" rx="2.500" ry=".900" fill="#d8d8d8"/><path d="M6 6v7.500M8 6.300v7.500M10 6v7.500" stroke="#9e9e9e" stroke-width=".8"/></svg></td></tr>
<tr class="r"><td></td>
<td class="c">13</td><td style="letter-spacing:0.22px">2012-06-04</td><td>5</td><td>3</td><td>44</td>
<td><span class="sw" style="background:transparent"></span></td>
<td class="c">kg</td>
<td class="c">--</td>
<td class="c">1</td>
<td class="c">--</td>
<td class="c">--</td>
<td class="c">$ 23,00</td>
<td class="c">$ 0,00</td>
<td class="c">$ 0,00</td>
<td class="c">$ 0,03</td>
<td class="ac"><svg class="pe" width="16" height="16" viewBox="0 0 16 16"><rect x=".500" y=".500" width="13" height="15" rx="1.300" fill="#fff" stroke="#c6c6c6"/><path d="M2.500 2.500h7M2.500 4.500h4" stroke="#e6eef8"/><g transform="translate(.9,1.100) scale(.9)"><path d="M3 13.600l1.100-3.600 7.400-7.400 2.800 2.800-7.400 7.400z" fill="#f8d94e" stroke="#d98a1e" stroke-width=".9" stroke-linejoin="round"/><path d="M5.200 10.600l6.800-6.800" stroke="#fff4b0" stroke-width="1"/><path d="M11.500 2.600l2.800 2.800 .800-.800q.600-.600 0-1.200l-1.600-1.600q-.600-.600-1.200 0z" fill="#f7c4a0" stroke="#d98a1e" stroke-width=".7"/><path d="M3 13.600l1.100-3.600 2.500 2.500z" fill="#efc08a" stroke="#b86a1a" stroke-width=".5"/><path d="M3 13.600l.500-1.600 1.100 1.100z" fill="#6b3a10"/></g></svg><svg class="tr" width="16" height="16" viewBox="0 0 16 16"><path d="M3.500 2.800v10.700q0 1.300 1.500 1.300h6q1.500 0 1.500-1.300v-10.700z" fill="url(#gT)" stroke="#707070"/><ellipse cx="8" cy="2.900" rx="4.500" ry="1.900" fill="#f1f1f1" stroke="#7c7c7c"/><ellipse cx="8" cy="2.900" rx="2.500" ry=".900" fill="#d8d8d8"/><path d="M6 6v7.500M8 6.300v7.500M10 6v7.500" stroke="#9e9e9e" stroke-width=".8"/></svg></td></tr>
<tr class="r alt"><td></td>
<td class="c">14</td><td style="letter-spacing:0.22px">2012-06-05</td><td>1</td><td>3</td><td>23</td>
<td><span class="sw" style="background:transparent"></span></td>
<td class="c">kg</td>
<td class="c">1.0</td>
<td class="c">10</td>
<td class="c">--</td>
<td class="c">--</td>
<td class="c">$ 15,00</td>
<td class="c">$ 0,00</td>
<td class="c">$ 0,00</td>
<td class="c">$ 0,02</td>
<td class="ac"><svg class="pe" width="16" height="16" viewBox="0 0 16 16"><rect x=".500" y=".500" width="13" height="15" rx="1.300" fill="#fff" stroke="#c6c6c6"/><path d="M2.500 2.500h7M2.500 4.500h4" stroke="#e6eef8"/><g transform="translate(.9,1.100) scale(.9)"><path d="M3 13.600l1.100-3.600 7.400-7.400 2.800 2.800-7.400 7.400z" fill="#f8d94e" stroke="#d98a1e" stroke-width=".9" stroke-linejoin="round"/><path d="M5.200 10.600l6.800-6.800" stroke="#fff4b0" stroke-width="1"/><path d="M11.500 2.600l2.800 2.800 .800-.800q.600-.600 0-1.200l-1.600-1.600q-.600-.600-1.200 0z" fill="#f7c4a0" stroke="#d98a1e" stroke-width=".7"/><path d="M3 13.600l1.100-3.600 2.500 2.500z" fill="#efc08a" stroke="#b86a1a" stroke-width=".5"/><path d="M3 13.600l.500-1.600 1.100 1.100z" fill="#6b3a10"/></g></svg><svg class="tr" width="16" height="16" viewBox="0 0 16 16"><path d="M3.500 2.800v10.700q0 1.300 1.500 1.300h6q1.500 0 1.500-1.300v-10.700z" fill="url(#gT)" stroke="#707070"/><ellipse cx="8" cy="2.900" rx="4.500" ry="1.900" fill="#f1f1f1" stroke="#7c7c7c"/><ellipse cx="8" cy="2.900" rx="2.500" ry=".900" fill="#d8d8d8"/><path d="M6 6v7.500M8 6.300v7.500M10 6v7.500" stroke="#9e9e9e" stroke-width=".8"/></svg></td></tr>
<tr class="r"><td></td>
<td class="c">15</td><td style="letter-spacing:0.22px">2012-06-05</td><td>1</td><td>3</td><td>24</td>
<td><span class="sw" style="background:transparent"></span></td>
<td class="c">kg</td>
<td class="c">--</td>
<td class="c">1</td>
<td class="c">--</td>
<td class="c">--</td>
<td class="c">$ 15,00</td>
<td class="c">$ 0,00</td>
<td class="c">$ 0,00</td>
<td class="c">$ 0,02</td>
<td class="ac"><svg class="pe" width="16" height="16" viewBox="0 0 16 16"><rect x=".500" y=".500" width="13" height="15" rx="1.300" fill="#fff" stroke="#c6c6c6"/><path d="M2.500 2.500h7M2.500 4.500h4" stroke="#e6eef8"/><g transform="translate(.9,1.100) scale(.9)"><path d="M3 13.600l1.100-3.600 7.400-7.400 2.800 2.800-7.400 7.400z" fill="#f8d94e" stroke="#d98a1e" stroke-width=".9" stroke-linejoin="round"/><path d="M5.200 10.600l6.800-6.800" stroke="#fff4b0" stroke-width="1"/><path d="M11.500 2.600l2.800 2.800 .800-.800q.600-.600 0-1.200l-1.600-1.600q-.600-.600-1.200 0z" fill="#f7c4a0" stroke="#d98a1e" stroke-width=".7"/><path d="M3 13.600l1.100-3.600 2.500 2.500z" fill="#efc08a" stroke="#b86a1a" stroke-width=".5"/><path d="M3 13.600l.500-1.600 1.100 1.100z" fill="#6b3a10"/></g></svg><svg class="tr" width="16" height="16" viewBox="0 0 16 16"><path d="M3.500 2.800v10.700q0 1.300 1.500 1.300h6q1.500 0 1.500-1.300v-10.700z" fill="url(#gT)" stroke="#707070"/><ellipse cx="8" cy="2.900" rx="4.500" ry="1.900" fill="#f1f1f1" stroke="#7c7c7c"/><ellipse cx="8" cy="2.900" rx="2.500" ry=".900" fill="#d8d8d8"/><path d="M6 6v7.500M8 6.300v7.500M10 6v7.500" stroke="#9e9e9e" stroke-width=".8"/></svg></td></tr>
</table>
<div id="status">Esperando a www.casuye.com.ar...</div>
</div>
<div id="sb"><div class="w3d" style="top:-4px;height:475px"></div><div class="w3d" style="top:655px;height:16px"><i style="position:absolute;left:3px;top:5px;border-left:4px solid transparent;border-right:4px solid transparent;border-top:4px solid #000"></i></div></div>
<div style="position:absolute;left:0;top:671px;width:1366px;height:1px;background:#d4d0c8"></div>
</body></html>
